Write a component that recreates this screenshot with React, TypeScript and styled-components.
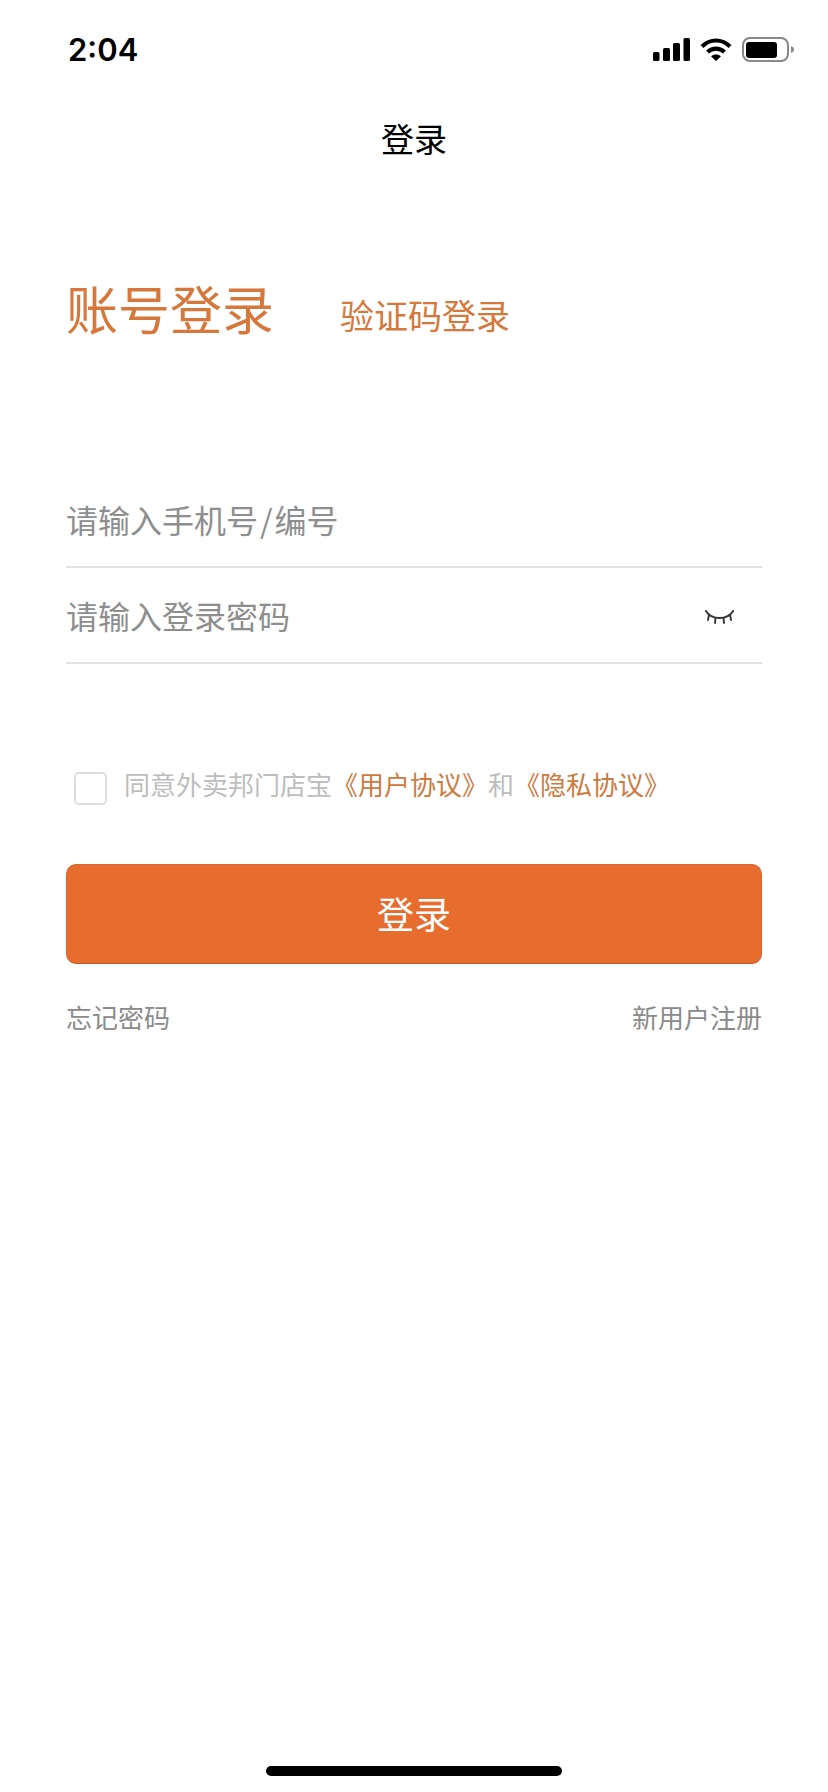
import React from "react";
import styled, { createGlobalStyle } from "styled-components";

const cjk = `"Noto Sans CJK SC", "Liberation Sans", sans-serif`;

const Global = createGlobalStyle`
  html, body { margin: 0; padding: 0; background: #fff; }
  * { box-sizing: border-box; }
`;

const Page = styled.div`
  width: 828px;
  min-height: 1792px;
  display: flex;
  flex-direction: column;
  background: #fff;
  font-family: ${cjk};
`;

const StatusBar = styled.div`
  height: 98px;
  padding: 0 34px 0 68px;
  display: flex;
  align-items: center;
  justify-content: space-between;
`;

const Time = styled.span`
  font-family: Inter, "Liberation Sans", sans-serif;
  font-size: 31px;
  font-weight: 600;
  color: #000;
`;

const StatusIcons = styled.div`
  display: flex;
  align-items: center;
  gap: 10px;
`;

const NavBar = styled.div`
  height: 84px;
  padding-bottom: 4px;
  display: flex;
  align-items: center;
  justify-content: center;
  font-size: 33px;
  color: #000;
`;

const Content = styled.main`
  padding: 0 66px;
  display: flex;
  flex-direction: column;
`;

const Tabs = styled.div`
  margin-top: 96px;
  display: flex;
  align-items: flex-end;
  gap: 66px;
`;

const Tab = styled.span<{ $active?: boolean }>`
  font-size: ${(p) => (p.$active ? "52px" : "34px")};
  line-height: ${(p) => (p.$active ? "60px" : "46px")};
  color: #d6783c;
`;

const Fields = styled.div`
  margin-top: 134px;
  display: flex;
  flex-direction: column;
`;

const Field = styled.div`
  height: 96px;
  padding-right: 28px;
  display: flex;
  align-items: center;
  justify-content: space-between;
  border-bottom: 2px solid #e3e3e3;
`;

const Placeholder = styled.span`
  font-size: 32px;
  color: #8e8e8e;
`;

const Slash = styled.span`
  padding: 0 2px;
`;

const EyeSlot = styled.span`
  display: flex;
  margin-top: 4px;
`;

const Agreement = styled.div`
  margin-top: 99px;
  height: 40px;
  padding-left: 8px;
  display: flex;
  align-items: center;
  font-size: 26px;
  color: #bdbdbd;
  white-space: nowrap;
`;

const CheckBox = styled.span`
  width: 33px;
  height: 33px;
  margin: 10px 17px 0 0;
  flex: none;
  border: 2px solid #dedede;
  border-radius: 5px;
  background: #fff;
`;

const DocLink = styled.span`
  color: #cd7a3f;
`;

const LoginButton = styled.button`
  margin-top: 61px;
  width: 696px;
  height: 100px;
  padding: 0 0 2px;
  border: 1px solid #d9662c;
  border-bottom-color: #c05a27;
  border-radius: 10px;
  background: #e76d2f;
  color: #fff;
  font-family: ${cjk};
  font-size: 37px;
`;

const Links = styled.div`
  margin-top: 33px;
  display: flex;
  justify-content: space-between;
  font-size: 26px;
  line-height: 40px;
  color: #8a8a8a;
`;

const HomeBar = styled.div`
  margin: auto auto 16px;
  width: 296px;
  height: 10px;
  border-radius: 5px;
  background: #000;
`;

const SignalIcon = () => (
  <svg width="37" height="23" viewBox="0 0 37 23">
    <rect x="0" y="14" width="6.5" height="9" rx="1.5" fill="#000" />
    <rect x="10" y="10" width="7" height="13" rx="1.5" fill="#000" />
    <rect x="20" y="5" width="7" height="18" rx="1.5" fill="#000" />
    <rect x="30.5" y="0" width="6.5" height="23" rx="1.5" fill="#000" />
  </svg>
);

const WifiIcon = () => (
  <svg width="32" height="23" viewBox="0 0 32 23" fill="none">
    <path d="M2 8.5C10 0.5 22 0.5 30 8.5" stroke="#000" strokeWidth="4.2" />
    <path d="M7.5 14C12.5 9.5 19.5 9.5 24.5 14" stroke="#000" strokeWidth="4.2" />
    <path d="M11 18.2C14 16 18 16 21 18.2L16 23Z" fill="#000" />
  </svg>
);

const BatteryIcon = () => (
  <svg width="52" height="25" viewBox="0 0 52 25" fill="none">
    <rect x="1" y="1" width="45" height="23" rx="7" stroke="#888" strokeWidth="2" />
    <rect x="4" y="5" width="31" height="16" rx="3" fill="#000" />
    <path d="M49 9C51 9.8 52 11 52 12.5C52 14 51 15.2 49 16Z" fill="#888" />
  </svg>
);

const EyeIcon = () => (
  <svg width="29" height="14" viewBox="0 0 29 14" fill="none" stroke="#333" strokeWidth="1.9" strokeLinecap="round">
    <path d="M0.9 0.9C4 6 8 8 14.5 8C21 8 25 6 28.1 0.9" />
    <path d="M4 5L3 10" />
    <path d="M10.5 8L10 13" />
    <path d="M18.5 8L19 13" />
    <path d="M25 5L26 10" />
  </svg>
);

export default function App() {
  return (
    <Page>
      <Global />
      <StatusBar>
        <Time>2:04</Time>
        <StatusIcons>
          <SignalIcon />
          <WifiIcon />
          <BatteryIcon />
        </StatusIcons>
      </StatusBar>
      <NavBar>登录</NavBar>
      <Content>
        <Tabs>
          <Tab $active>账号登录</Tab>
          <Tab>验证码登录</Tab>
        </Tabs>
        <Fields>
          <Field>
            <Placeholder>请输入手机号<Slash>/</Slash>编号</Placeholder>
          </Field>
          <Field>
            <Placeholder>请输入登录密码</Placeholder>
            <EyeSlot>
              <EyeIcon />
            </EyeSlot>
          </Field>
        </Fields>
        <Agreement>
          <CheckBox />
          同意外卖邦门店宝<DocLink>《用户协议》</DocLink>和<DocLink>《隐私协议》</DocLink>
        </Agreement>
        <LoginButton>登录</LoginButton>
        <Links>
          <span>忘记密码</span>
          <span>新用户注册</span>
        </Links>
      </Content>
      <HomeBar />
    </Page>
  );
}
